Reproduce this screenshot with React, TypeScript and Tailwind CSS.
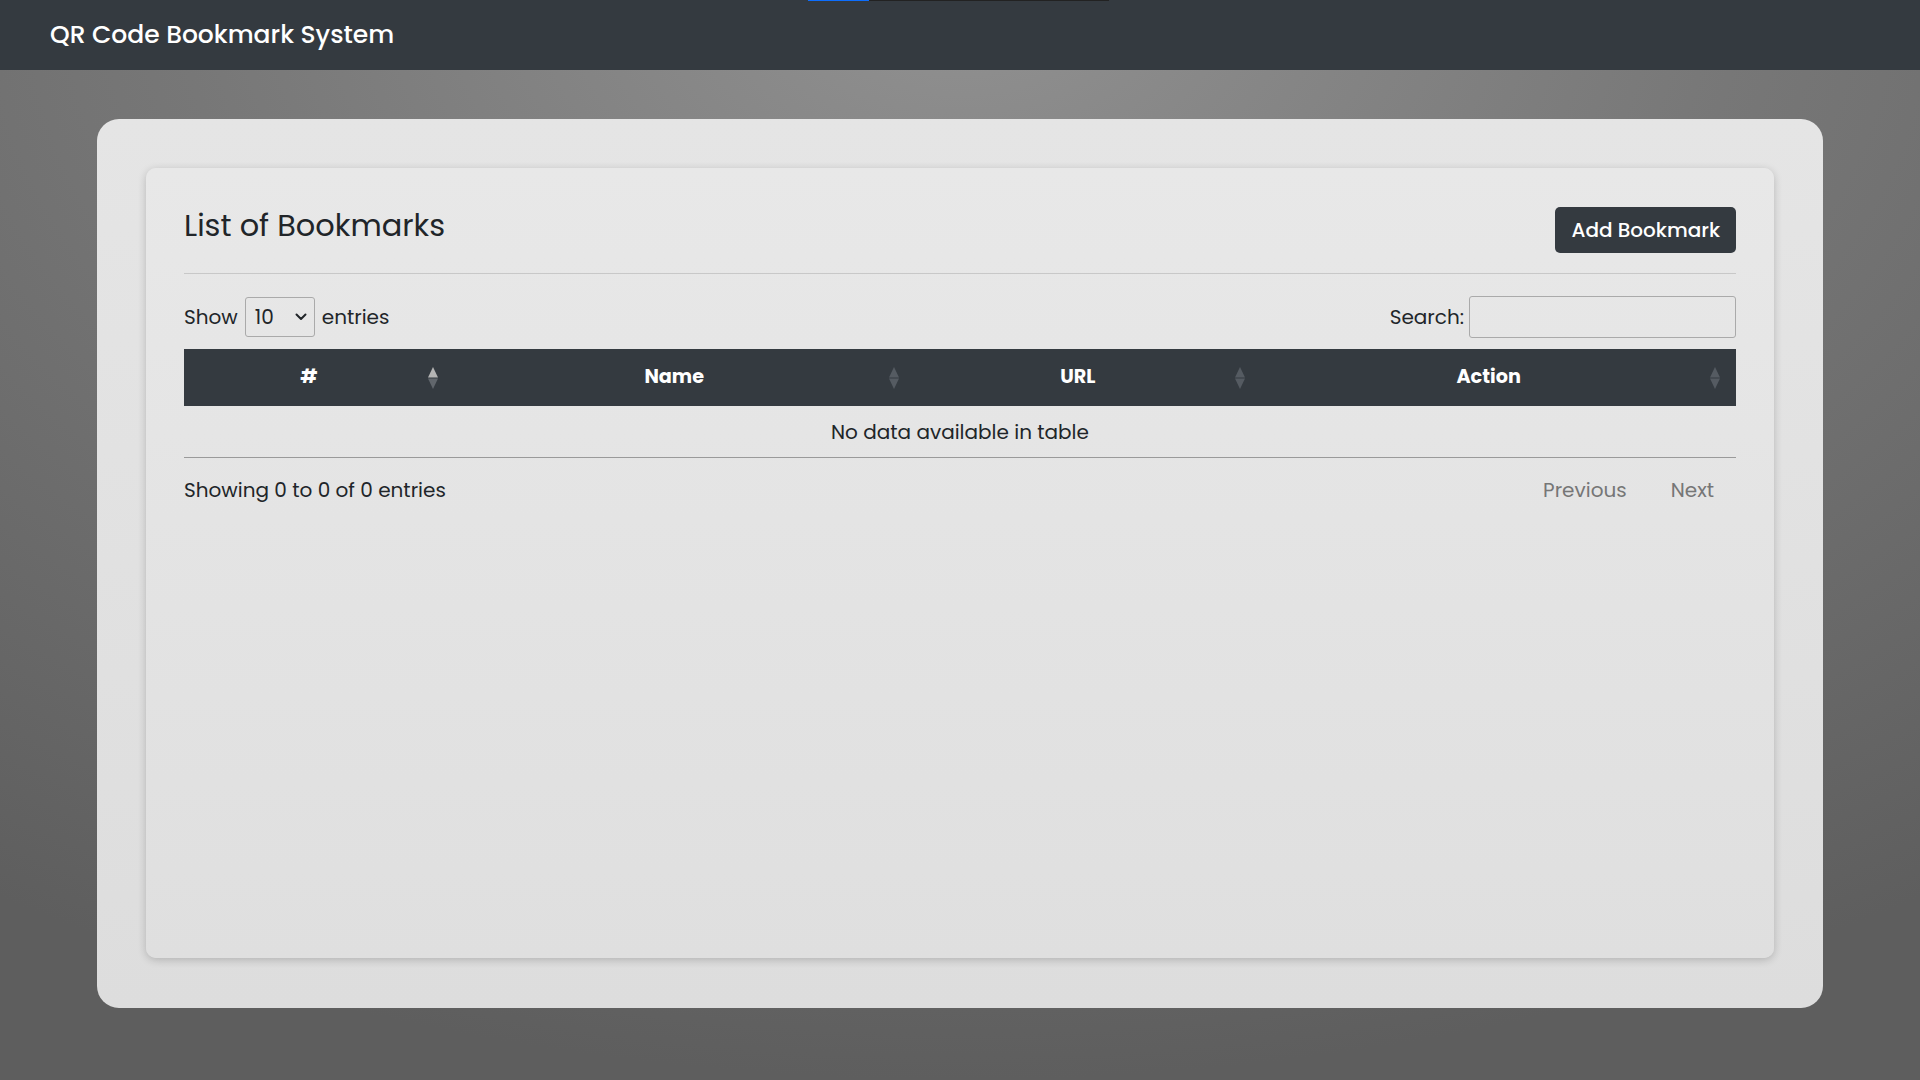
import React from "react"

const font = "font-['Poppins','Inter',sans-serif]"

const columns = [
  { label: "#", width: "w-[270px]", active: true },
  { label: "Name", width: "w-[461px]", active: false },
  { label: "URL", width: "w-[347px]", active: false },
  { label: "Action", width: "w-[475px]", active: false },
]

function SortIcon({ active }: { active: boolean }) {
  return (
    <svg width="10" height="22" viewBox="0 0 10 22" className="shrink-0">
      <polygon points="5,0 10,10.5 0,10.5" fill={active ? "#b4b4b4" : "#555b62"} />
      <polygon points="0,11.5 10,11.5 5,22" fill={active ? "#61666c" : "#555b62"} />
    </svg>
  )
}

export default function App() {
  return (
    <div
      className={`${font} relative min-h-[1080px] w-full bg-[radial-gradient(ellipse_90%_100%_at_50%_0%,#919191_0%,#777777_45%,#5e5e5e_100%)] text-[#212529]`}
    >
      {/* loading bar */}
      <div className="absolute left-[808px] top-0 flex h-px">
        <div className="w-[61px] bg-[#0d6efd]" />
        <div className="w-[240px] bg-[#222222]" />
      </div>

      <header className="flex h-[70px] items-center bg-[#343a40] px-[50px]">
        <span className="text-[25px] font-medium text-white">QR Code Bookmark System</span>
      </header>

      <main className="px-[97px] pt-[49px] pb-[72px]">
        <div className="h-[889px] rounded-[22px] bg-[linear-gradient(to_bottom,#e5e5e5,#dddddd)] p-[49px]">
          <div className="h-[790px] rounded-[10px] bg-[linear-gradient(to_bottom,#e8e8e8,#dfdfdf)] px-[38px] pt-[35px] shadow-[0_2px_9px_rgba(0,0,0,0.2)]">
            {/* title row */}
            <div className="flex items-start justify-between border-b border-[#c8c8c8] pb-[20px]">
              <h3 className="mt-[3px] text-[30.4px] leading-[40px] font-normal">List of Bookmarks</h3>
              <button className="mt-[4px] h-[46px] rounded-[5px] bg-[#343a40] px-[16px] text-[20px] font-medium text-white">
                Add Bookmark
              </button>
            </div>

            {/* controls */}
            <div className="mt-[22px] flex h-[42px] items-center justify-between text-[20px]">
              <div className="flex items-center gap-[7px]">
                <span>Show</span>
                <div className="flex h-[40px] w-[70px] items-center justify-between rounded-[3px] border border-[#aaaaaa] pl-[9px] pr-[7px]">
                  <span>10</span>
                  <svg width="12" height="8" viewBox="0 0 12 8">
                    <path d="M1.5 1.5 L6 6 L10.5 1.5" fill="none" stroke="#212529" strokeWidth="2" strokeLinecap="round" strokeLinejoin="round" />
                  </svg>
                </div>
                <span>entries</span>
              </div>
              <div className="flex items-center gap-[5px]">
                <span>Search:</span>
                <input className="h-[42px] w-[267px] rounded-[3px] border border-[#aaaaaa] bg-transparent px-2 outline-none" />
              </div>
            </div>

            {/* table */}
            <div className="mt-[11px]">
              <div className="flex h-[57px] bg-[#343a40] text-[19.2px] font-bold text-white">
                {columns.map((col) => (
                  <div key={col.label} className={`${col.width} flex items-center pl-[6px] pr-[16px]`}>
                    <span className="flex-1 text-center">{col.label}</span>
                    <SortIcon active={col.active} />
                  </div>
                ))}
              </div>
              <div className="flex h-[52px] items-center justify-center border-b border-[#9a9a9a] text-[20px]">
                No data available in table
              </div>
            </div>

            {/* footer */}
            <div className="mt-[17px] flex items-center justify-between text-[20px]">
              <span>Showing 0 to 0 of 0 entries</span>
              <div className="flex items-center text-[#767676]">
                <span className="px-[22px]">Previous</span>
                <span className="px-[22px]">Next</span>
              </div>
            </div>
          </div>
        </div>
      </main>
    </div>
  )
}
